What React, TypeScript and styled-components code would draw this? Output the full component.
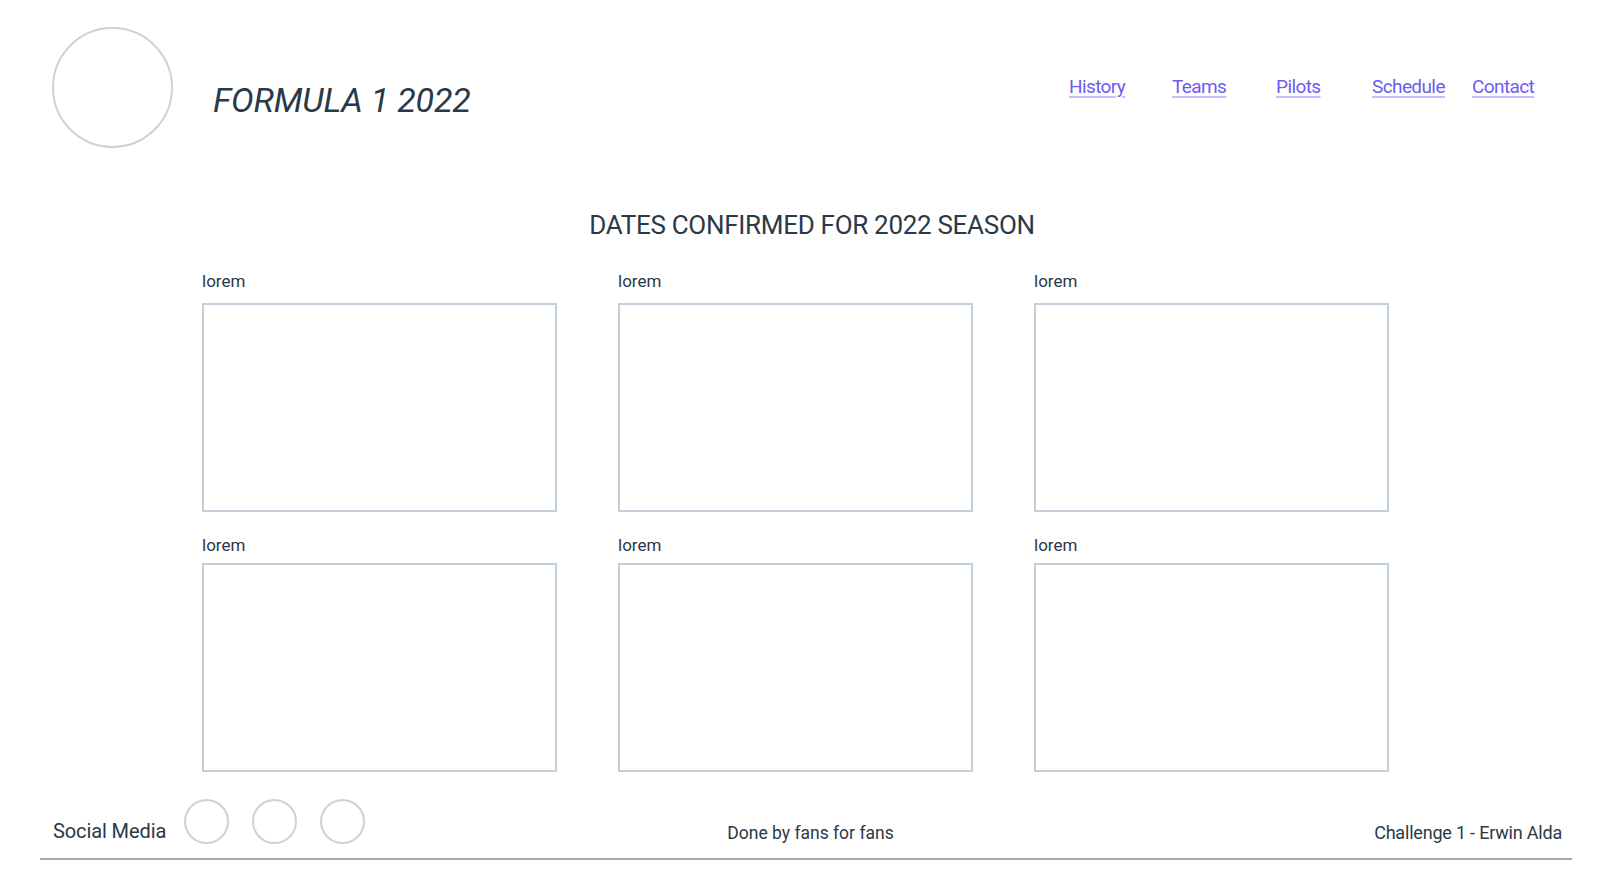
import React from "react";
import styled, { createGlobalStyle } from "styled-components";

const GlobalStyle = createGlobalStyle`
  html, body {
    margin: 0;
    padding: 0;
    background: #ffffff;
  }
  body {
    font-family: Roboto, "Liberation Sans", sans-serif;
    color: #2a3947;
  }
  * { box-sizing: border-box; }
`;

const Page = styled.div`
  width: 1600px;
  height: 880px;
  overflow: hidden;
  display: flex;
  flex-direction: column;
`;

const Header = styled.header`
  display: flex;
  align-items: flex-start;
  padding: 27px 69px 0 52px;
  height: 148px;
`;

const Logo = styled.div`
  width: 121px;
  height: 121px;
  border-radius: 50%;
  border: 2px solid #c8d3de;
  flex-shrink: 0;
`;

const Title = styled.h1`
  margin: 56px 0 0 40px;
  font-size: 34px;
  line-height: 1;
  font-style: italic;
  font-weight: 400;
  letter-spacing: -0.2px;
  color: #2a3947;
`;

const Nav = styled.nav`
  margin-left: auto;
  margin-top: 48px;
  display: grid;
  grid-template-columns: 103px 104px 96px 100px auto;
  width: 462px;
`;

const NavLink = styled.a`
  font-size: 19px;
  line-height: 24px;
  color: #6b5cf4;
  text-decoration: underline;
  text-decoration-color: #c4bffb;
  text-decoration-thickness: 2px;
  text-underline-offset: 3px;
  letter-spacing: -0.6px;
  cursor: pointer;
  justify-self: start;
`;

const Main = styled.main`
  display: flex;
  flex-direction: column;
`;

const Heading = styled.h2`
  margin: 64px 0 0 0;
  padding-left: 24px;
  text-align: center;
  font-size: 26px;
  line-height: 1;
  font-weight: 400;
  letter-spacing: -0.3px;
  color: #2a3947;
`;

const Grid = styled.div`
  margin: 33px 0 0 202px;
  display: grid;
  grid-template-columns: repeat(3, 355px);
  column-gap: 61px;
  row-gap: 23px;
`;

const Cell = styled.div<{ $labelGap: number }>`
  display: flex;
  flex-direction: column;
  gap: ${(p) => p.$labelGap}px;
`;

const CellLabel = styled.span`
  font-size: 17px;
  line-height: 20px;
  color: #2a3947;
`;

const Card = styled.div`
  height: 209px;
  border: 2px solid #c3cfda;
`;

const Footer = styled.footer`
  margin: 27px 28px 0 40px;
  padding: 0 10px 14px 13px;
  border-bottom: 2px solid #9daab7;
  display: grid;
  grid-template-columns: 1fr auto 1fr;
  align-items: end;
`;

const Social = styled.div`
  display: flex;
  align-items: flex-end;
  gap: 18px;
`;

const SocialLabel = styled.span`
  font-size: 20px;
  line-height: 26px;
  letter-spacing: -0.1px;
`;

const SocialIcons = styled.div`
  display: flex;
  gap: 23px;
`;

const SocialIcon = styled.div`
  width: 45px;
  height: 45px;
  border-radius: 50%;
  border: 2px solid #c8d3de;
`;

const FooterText = styled.span<{ $align: "center" | "right" }>`
  font-size: ${(p) => (p.$align === "center" ? 17.5 : 18)}px;
  line-height: 22px;
  text-align: ${(p) => p.$align};
  justify-self: ${(p) => (p.$align === "center" ? "center" : "end")};
  letter-spacing: ${(p) => (p.$align === "center" ? 0 : -0.2)}px;
  padding-left: ${(p) => (p.$align === "center" ? 6 : 0)}px;
`;

const navItems = ["History", "Teams", "Pilots", "Schedule", "Contact"];

export default function App() {
  return (
    <>
      <GlobalStyle />
      <Page>
        <Header>
          <Logo />
          <Title>FORMULA 1 2022</Title>
          <Nav>
            {navItems.map((n) => (
              <NavLink key={n} href="#">
                {n}
              </NavLink>
            ))}
          </Nav>
        </Header>
        <Main>
          <Heading>DATES CONFIRMED FOR 2022 SEASON</Heading>
          <Grid>
            {[0, 1, 2, 3, 4, 5].map((i) => (
              <Cell key={i} $labelGap={i < 3 ? 12 : 8}>
                <CellLabel>lorem</CellLabel>
                <Card />
              </Cell>
            ))}
          </Grid>
        </Main>
        <Footer>
          <Social>
            <SocialLabel>Social Media</SocialLabel>
            <SocialIcons>
              <SocialIcon />
              <SocialIcon />
              <SocialIcon />
            </SocialIcons>
          </Social>
          <FooterText $align="center">Done by fans for fans</FooterText>
          <FooterText $align="right">Challenge 1 - Erwin Alda</FooterText>
        </Footer>
      </Page>
    </>
  );
}
